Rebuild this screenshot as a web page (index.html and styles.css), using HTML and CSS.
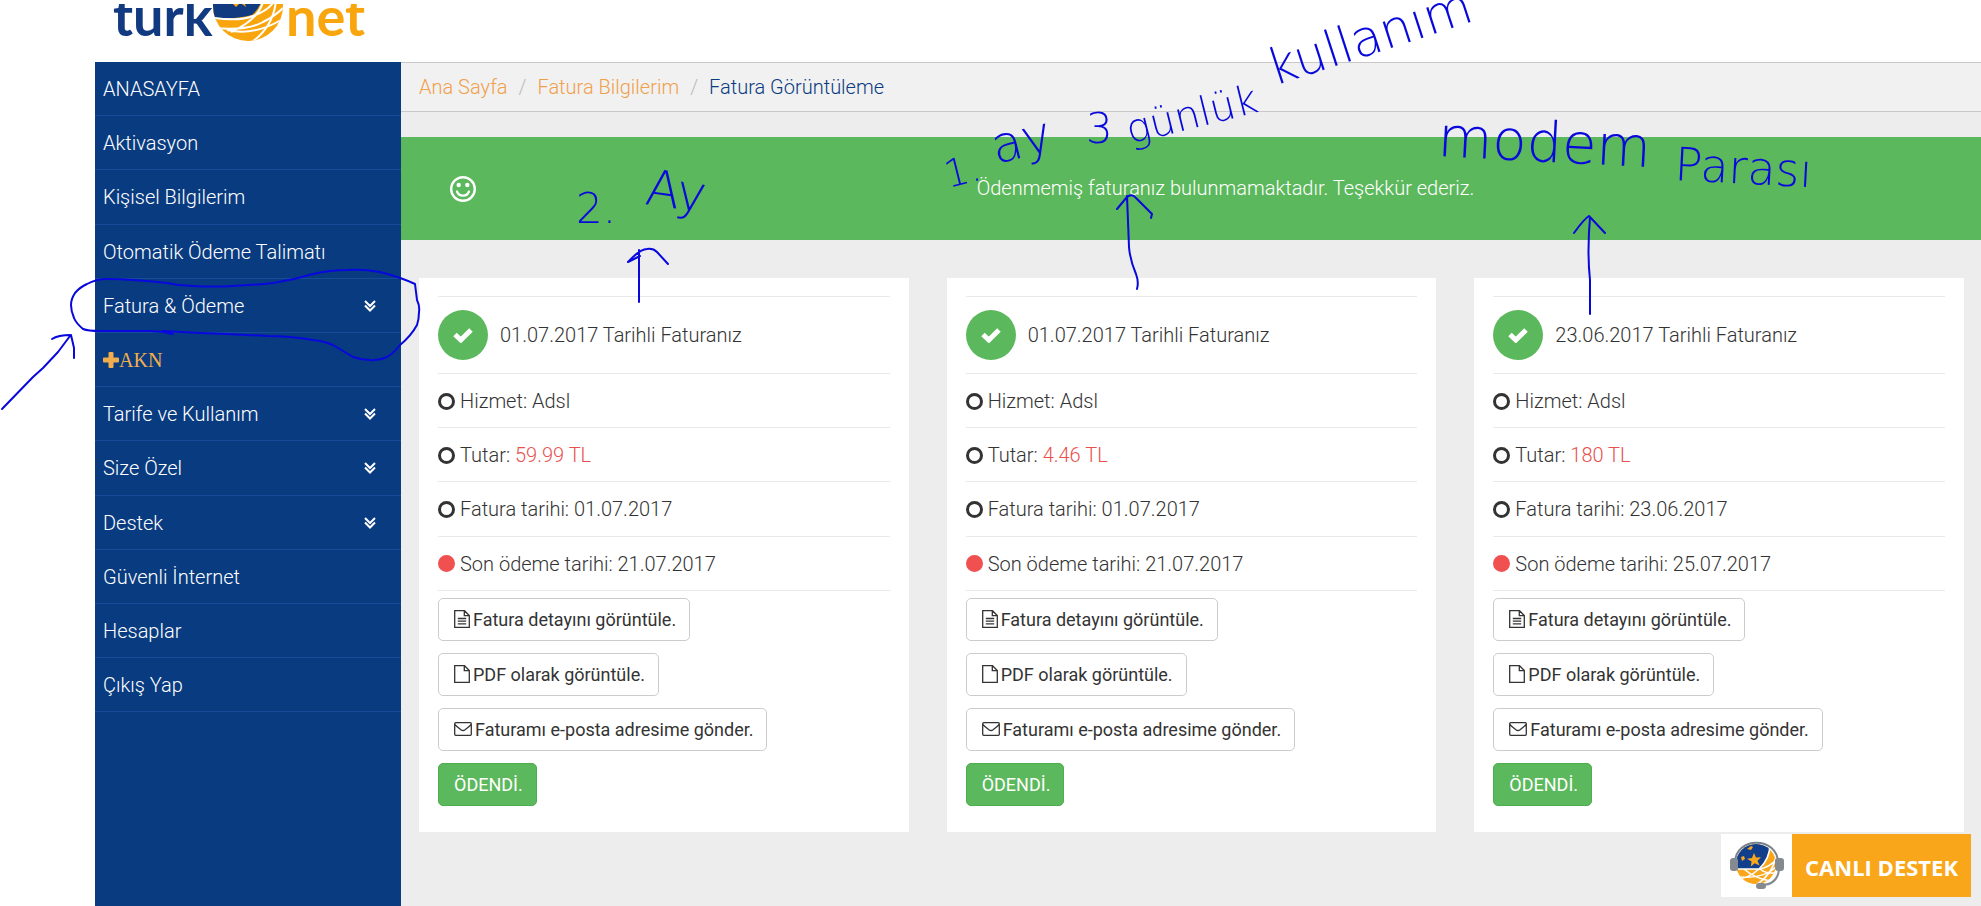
FILE: index.html
```html
<!DOCTYPE html>
<html lang="tr">

<head>
    <meta charset="UTF-8">
    <meta name="viewport" content="width=device-width, initial-scale=1.0">
    <title>Fatura Görüntüleme</title>
    <link rel="stylesheet" href="styles.css">
</head>

<body>
    <!-- icons -->
    <svg class="sprite" aria-hidden="true">
        <symbol id="i-down" viewBox="0 0 14 12">
            <path d="M2 1l5 5 5-5M2 5.500l5 5 5-5" fill="none" stroke="currentColor" stroke-width="2" />
        </symbol>
        <symbol id="i-plus" viewBox="0 0 16 16">
            <path d="M6.500 0h3q1 0 1 1v4.500H15q1 0 1 1v3q0 1-1 1h-4.500V15q0 1-1 1h-3q-1 0-1-1v-4.500H1q-1 0-1-1v-3q0-1 1-1h4.500V1q0-1 1-1z" fill="currentColor" />
        </symbol>
        <symbol id="i-check" viewBox="0 0 20 16">
            <path d="M2 7.500l5.800 5.500L18 3" fill="none" stroke="currentColor" stroke-width="5" />
        </symbol>
        <symbol id="i-smile" viewBox="0 0 26 26">
            <circle cx="13" cy="13" r="11.800" fill="none" stroke="currentColor" stroke-width="2.400" />
            <circle cx="8.700" cy="9" r="2.200" fill="currentColor" />
            <circle cx="17.300" cy="9" r="2.200" fill="currentColor" />
            <path d="M7 15.500c2 5.500 10 5.500 12 0" fill="none" stroke="currentColor" stroke-width="2.200" stroke-linecap="round" />
        </symbol>
        <symbol id="i-text" viewBox="0 0 16 18">
            <path d="M1 .7h9.500l4.800 4.800v11.800H.7V.7zM10.300 1v4.700H15M3.800 8.500h8.400M3.800 11.200h8.400M3.800 13.900h8.400" fill="none" stroke="currentColor" stroke-width="1.300" />
        </symbol>
        <symbol id="i-file" viewBox="0 0 16 18">
            <path d="M1 .7h9.500l4.800 4.800v11.800H.7V.7zM10.300 1v4.700H15" fill="none" stroke="currentColor" stroke-width="1.300" />
        </symbol>
        <symbol id="i-mail" viewBox="0 0 18 14">
            <path d="M1.700.7h14.600q1 0 1 1v10.600q0 1-1 1H1.700q-1 0-1-1V1.700q0-1 1-1zM.9 2.500c2 2.200 4 3.600 6 5.200q2.100 1.600 4.200 0c2-1.600 4-3 6-5.200" fill="none" stroke="currentColor" stroke-width="1.300" />
        </symbol>
    </svg>

    <header class="header">
        <a href="#" class="logo" aria-label="turk net">
            <svg width="262" height="42" viewBox="0 4 262 42">
                <defs>
                    <clipPath id="ball">
                        <circle cx="136" cy="6" r="35" />
                    </clipPath>
                </defs>
                <text class="logo-turk" x="1" y="36">turk</text>
                <g clip-path="url(#ball)">
                    <rect x="96" y="4" width="80" height="40" fill="#f9a60e" />
                    <path d="M96 0h54q-3 9-10 15-16 5-44 2z" fill="#123a80" />
                    <path d="M121 4l3 3 3-3h3l4 3-1-3z" fill="#f9a60e" />
                    <path d="M97 17q29 5 44-1 14-5 20-13M102 28q33 3 49-6 12-6 20-14M115 30q27 6 54-10M151 2q-5 18-32 30M164 1q-3 26-24 41" fill="none" stroke="#fff" stroke-width="2" />
                </g>
                <text class="logo-net" x="174" y="36">net</text>
            </svg>
        </a>
    </header>

    <div class="wrap">
        <nav class="sidebar">
            <ul>
                <li><a href="#">ANASAYFA</a></li>
                <li><a href="#">Aktivasyon</a></li>
                <li><a href="#">Kişisel Bilgilerim</a></li>
                <li><a href="#">Otomatik Ödeme Talimatı</a></li>
                <li><a href="#">Fatura &amp; Ödeme <svg class="down"><use href="#i-down" /></svg></a></li>
                <li><a href="#" class="akn"><svg class="plus"><use href="#i-plus" /></svg>AKN</a></li>
                <li><a href="#">Tarife ve Kullanım <svg class="down"><use href="#i-down" /></svg></a></li>
                <li><a href="#">Size Özel <svg class="down"><use href="#i-down" /></svg></a></li>
                <li><a href="#">Destek <svg class="down"><use href="#i-down" /></svg></a></li>
                <li><a href="#">Güvenli İnternet</a></li>
                <li><a href="#">Hesaplar</a></li>
                <li><a href="#">Çıkış Yap</a></li>
            </ul>
        </nav>

        <main class="content">
            <ol class="breadcrumb">
                <li><a href="#">Ana Sayfa</a></li>
                <li><a href="#">Fatura Bilgilerim</a></li>
                <li>Fatura Görüntüleme</li>
            </ol>

            <div class="alert">
                <svg class="smile"><use href="#i-smile" /></svg>
                <p>Ödenmemiş faturanız bulunmamaktadır. Teşekkür ederiz.</p>
            </div>

            <div class="cards">
                <section class="card">
                    <ul class="info">
                        <li class="card-title"><span class="ok"><svg><use href="#i-check" /></svg></span>01.07.2017 Tarihli Faturanız</li>
                        <li><i class="dot"></i>Hizmet: Adsl</li>
                        <li><i class="dot"></i>Tutar: <span class="price">59.99 TL</span></li>
                        <li><i class="dot"></i>Fatura tarihi: 01.07.2017</li>
                        <li><i class="dot dot-red"></i>Son ödeme tarihi: 21.07.2017</li>
                    </ul>
                    <div class="btns">
                        <button class="btn"><svg class="file"><use href="#i-text" /></svg>Fatura detayını görüntüle.</button>
                        <button class="btn"><svg class="file"><use href="#i-file" /></svg>PDF olarak görüntüle.</button>
                        <button class="btn"><svg class="mail"><use href="#i-mail" /></svg>Faturamı e-posta adresime gönder.</button>
                        <button class="btn btn-green">ÖDENDİ.</button>
                    </div>
                </section>

                <section class="card">
                    <ul class="info">
                        <li class="card-title"><span class="ok"><svg><use href="#i-check" /></svg></span>01.07.2017 Tarihli Faturanız</li>
                        <li><i class="dot"></i>Hizmet: Adsl</li>
                        <li><i class="dot"></i>Tutar: <span class="price">4.46 TL</span></li>
                        <li><i class="dot"></i>Fatura tarihi: 01.07.2017</li>
                        <li><i class="dot dot-red"></i>Son ödeme tarihi: 21.07.2017</li>
                    </ul>
                    <div class="btns">
                        <button class="btn"><svg class="file"><use href="#i-text" /></svg>Fatura detayını görüntüle.</button>
                        <button class="btn"><svg class="file"><use href="#i-file" /></svg>PDF olarak görüntüle.</button>
                        <button class="btn"><svg class="mail"><use href="#i-mail" /></svg>Faturamı e-posta adresime gönder.</button>
                        <button class="btn btn-green">ÖDENDİ.</button>
                    </div>
                </section>

                <section class="card">
                    <ul class="info">
                        <li class="card-title"><span class="ok"><svg><use href="#i-check" /></svg></span>23.06.2017 Tarihli Faturanız</li>
                        <li><i class="dot"></i>Hizmet: Adsl</li>
                        <li><i class="dot"></i>Tutar: <span class="price">180 TL</span></li>
                        <li><i class="dot"></i>Fatura tarihi: 23.06.2017</li>
                        <li><i class="dot dot-red"></i>Son ödeme tarihi: 25.07.2017</li>
                    </ul>
                    <div class="btns">
                        <button class="btn"><svg class="file"><use href="#i-text" /></svg>Fatura detayını görüntüle.</button>
                        <button class="btn"><svg class="file"><use href="#i-file" /></svg>PDF olarak görüntüle.</button>
                        <button class="btn"><svg class="mail"><use href="#i-mail" /></svg>Faturamı e-posta adresime gönder.</button>
                        <button class="btn btn-green">ÖDENDİ.</button>
                    </div>
                </section>
            </div>
        </main>
    </div>

    <a href="#" class="chat">
        <span class="chat-icon">
            <svg width="54" height="50" viewBox="0 0 54 50">
                <defs>
                    <clipPath id="globe">
                        <circle cx="26" cy="23" r="20" />
                    </clipPath>
                </defs>
                <g clip-path="url(#globe)">
                    <rect width="54" height="50" fill="#f9a61c" />
                    <path d="M0 0h40q0 17-10 28H0z" fill="#123f8c" />
                    <path d="M40 0q1 17-11 28Q18 38 6 38M8 28h22q10-2 18-11M10 36q24 2 36-10M14 28q10 9 26 12M30 28q6 5 16 4M46 16q-4 18-20 28" fill="none" stroke="#fff" stroke-width="1.600" />
                    <path d="M24 12l2 4.500 5-.3-3.500 3.600 2 4.700-4.700-2.300-4 3.300.8-5-4.600-2.700 5-.8zM17 8l4-3 2 1-2 3zM11 16l3-1 1 3-3 2z" fill="#f9a61c" />
                </g>
                <path d="M5 22C5-5 48-5 48 22" fill="none" stroke="#77818d" stroke-width="2" />
                <rect x="0" y="17" width="8" height="13" rx="3" fill="#858a91" />
                <rect x="45" y="17" width="9" height="13" rx="3" fill="#858a91" />
                <path d="M49 29q-2 15-18 15" fill="none" stroke="#858a91" stroke-width="2" />
                <rect x="26" y="42" width="10" height="6" rx="3" fill="#858a91" />
            </svg>
        </span>
        <span class="chat-text">CANLI DESTEK</span>
    </a>

    <!-- pen notes over the page -->
    <svg class="notes" width="1981" height="906" viewBox="0 0 1981 906">
        <path d="M173 334Q162 331 150 331L100 331Q88 331 83 329Q76 323 74 318Q71 311 71 305Q71 299 75 293Q80 287 87 284Q96 279 107 279Q120 279 133 280Q150 281 167 283Q180 286 193 286Q213 287 233 286Q253 285 273 283Q293 280 313 274Q330 270 347 270Q364 269 380 272Q400 277 415 284L417 300Q420 306 419 312Q419 319 417 325Q411 336 400 345Q394 353 387 357Q379 361 370 360Q361 360 353 357L333 345Q324 341 313 340Q290 336 267 336Q230 334 200 333L163 331" />
        <path d="M2 409L33 377 43 368 58 352 70 336M52 339Q58 335 71 335L74 348V358" />
        <path d="M639 302V250M628 262Q640 249 647 249Q653 248 657 252L668 264M628 262L640 256" />
        <path d="M1137 289Q1139 282 1136 274Q1130 260 1129 247L1127 196M1117 209L1127 197Q1132 193 1136 198L1152 214 1151 218" />
        <path d="M1590 314V280Q1587 253 1590 217M1574 233Q1584 219 1589 216L1605 233" />
        <text x="576" y="223" font-size="42">2.</text>
        <text transform="translate(644 204) rotate(8)" font-size="50">Ay</text>
        <text transform="translate(948 188) rotate(-14)" font-size="38">1.</text>
        <text transform="translate(996 164) rotate(-14)" font-size="50">ay</text>
        <text x="1086" y="143" font-size="42">3</text>
        <text transform="translate(1130 144) rotate(-14)" font-size="40">günlük</text>
        <text transform="translate(1274 86) rotate(-18)" font-size="50">kullanım</text>
        <text transform="translate(1437 156) rotate(3)" font-size="56">modem</text>
        <text transform="translate(1674 180) rotate(3)" font-size="46">Parası</text>
    </svg>
</body>

</html>
```
FILE: styles.css
```css
* {
    padding: 0;
    margin: 0;
    box-sizing: border-box;
}

body {
    display: flex;
    flex-direction: column;
    height: 100vh;
    overflow: hidden;
    font-family: Roboto, "Liberation Sans", sans-serif;
    font-size: 20px;
    font-weight: 300;
    line-height: 1.41;
    color: #333;
    background-color: #fff;
}

a {
    color: inherit;
    text-decoration: none;
}

ul,
ol {
    list-style: none;
}

.sprite {
    display: none;
}

.header {
    flex: none;
    height: 62px;
    padding: 4px 0 0 112px;
}

.logo svg {
    display: block;
}

.logo text {
    font-family: Lato, sans-serif;
    font-size: 54px;
    font-weight: 700;
}

.logo-turk {
    fill: #123a80;
}

.logo-net {
    fill: #f9a60e;
}

.wrap {
    display: flex;
    flex: 1;
    padding-left: 95px;
}

/* left menu */
.sidebar {
    flex: none;
    width: 306px;
    color: #fff;
    background-color: #093b80;
}

.sidebar a {
    display: flex;
    align-items: center;
    padding: 13px 24px 12px 8px;
    border-bottom: 1px solid #174c9b;
}

.down {
    width: 14px;
    height: 12px;
    margin-left: auto;
}

.sidebar .akn {
    font-family: "Liberation Serif", serif;
    font-weight: 400;
    color: #f0ad4e;
}

.plus {
    width: 16px;
    height: 16px;
}

.content {
    flex: 1;
    background-color: #ededed;
}

.breadcrumb {
    display: flex;
    height: 50px;
    padding: 10px 18px;
    border-top: 1px solid #c8c8c8;
    border-bottom: 1px solid #c8c8c8;
    color: #093b80;
    background-color: #f1f1f1;
}

.breadcrumb a {
    color: #f0a04b;
}

.breadcrumb li + li::before {
    content: "/";
    padding: 0 11px;
    color: #bbb;
}

.alert {
    display: flex;
    align-items: center;
    height: 103px;
    margin-top: 25px;
    padding: 0 38px 0 49px;
    color: #fff;
    background-color: #5cb85c;
}

.smile {
    width: 26px;
    height: 26px;
    margin-right: 32px;
}

.alert p {
    flex: 1;
    text-align: center;
}

/* invoices */
.cards {
    display: grid;
    grid-template-columns: repeat(3, 1fr);
    gap: 38px;
    padding: 38px 17px 38px 18px;
}

.card {
    padding: 18px 19px 26px;
    background-color: #fff;
}

.info {
    border-top: 1px solid #e9e9e9;
}

.info li {
    display: flex;
    align-items: center;
    padding: 13px 0 12px;
    border-bottom: 1px solid #e9e9e9;
    white-space: pre;
}

.info .card-title {
    padding: 13px 0;
}

.ok {
    display: flex;
    align-items: center;
    justify-content: center;
    width: 50px;
    height: 50px;
    margin-right: 12px;
    border-radius: 50%;
    color: #fff;
    background-color: #5cb85c;
}

.ok svg {
    width: 20px;
    height: 16px;
}

.dot {
    width: 17px;
    height: 17px;
    margin-right: 5px;
    border: 3px solid #333;
    border-radius: 50%;
}

.dot-red {
    border-color: #f0504f;
    background-color: #f0504f;
}

.price {
    color: #e8504e;
}

.btns {
    display: flex;
    flex-direction: column;
    align-items: flex-start;
    gap: 12px;
    padding-top: 7px;
}

.btn {
    display: flex;
    align-items: center;
    height: 43px;
    padding: 0 13px 0 15px;
    border: 1px solid #ccc;
    border-radius: 5px;
    font-family: inherit;
    font-size: 18px;
    font-weight: 400;
    color: #333;
    background-color: #fff;
    cursor: pointer;
}

.btn-green {
    border-color: #4cae4c;
    color: #fff;
    background-color: #5cb85c;
}

.file {
    width: 16px;
    height: 18px;
    margin-right: 3px;
}

.mail {
    width: 18px;
    height: 14px;
    margin-right: 3px;
}

/* live support */
.chat {
    position: fixed;
    right: 10px;
    bottom: 9px;
    display: flex;
    height: 63px;
    color: #fff;
    background-color: #faa61a;
}

.chat-icon {
    display: flex;
    align-items: center;
    justify-content: center;
    width: 71px;
    background-color: #fff;
}

.chat-text {
    padding: 0 13px;
    font-family: "Open Sans", sans-serif;
    font-size: 22px;
    font-weight: 700;
    line-height: 66px;
}

.notes {
    position: absolute;
    top: 0;
    left: 0;
    pointer-events: none;
}

.notes path {
    fill: none;
    stroke: #0808dc;
    stroke-width: 2;
    stroke-linecap: round;
    stroke-linejoin: round;
}

.notes text {
    font-family: "DejaVu Sans", sans-serif;
    font-weight: 200;
    fill: #0808dc;
}
```
